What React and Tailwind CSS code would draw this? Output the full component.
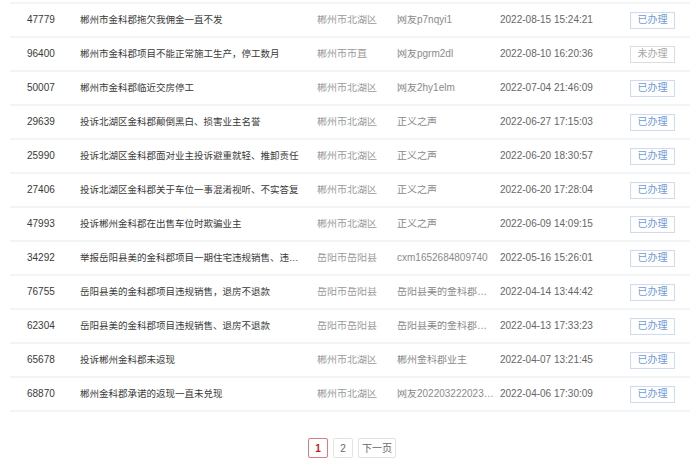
import React from "react";

const rows = [
  ["47779", "郴州市金科郡拖欠我佣金一直不发", "郴州市北湖区", "网友p7nqyi1", "2022-08-15 15:24:21", true],
  ["96400", "郴州市金科郡项目不能正常施工生产，停工数月", "郴州市市直", "网友pgrm2dl", "2022-08-10 16:20:36", false],
  ["50007", "郴州市金科郡临近交房停工", "郴州市北湖区", "网友2hy1elm", "2022-07-04 21:46:09", true],
  ["29639", "投诉北湖区金科郡颠倒黑白、损害业主名誉", "郴州市北湖区", "正义之声", "2022-06-27 17:15:03", true],
  ["25990", "投诉北湖区金科郡面对业主投诉避重就轻、推卸责任", "郴州市北湖区", "正义之声", "2022-06-20 18:30:57", true],
  ["27406", "投诉北湖区金科郡关于车位一事混淆视听、不实答复", "郴州市北湖区", "正义之声", "2022-06-20 17:28:04", true],
  ["47993", "投诉郴州金科郡在出售车位时欺骗业主", "郴州市北湖区", "正义之声", "2022-06-09 14:09:15", true],
  ["34292", "举报岳阳县美的金科郡项目一期住宅违规销售、违规收取费用", "岳阳市岳阳县", "cxm1652684809740", "2022-05-16 15:26:01", true],
  ["76755", "岳阳县美的金科郡项目违规销售，退房不退款", "岳阳市岳阳县", "岳阳县美的金科郡业主", "2022-04-14 13:44:42", true],
  ["62304", "岳阳县美的金科郡项目违规销售、退房不退款", "岳阳市岳阳县", "岳阳县美的金科郡业主", "2022-04-13 17:33:23", true],
  ["65678", "投诉郴州金科郡未返现", "郴州市北湖区", "郴州金科郡业主", "2022-04-07 13:21:45", true],
  ["68870", "郴州金科郡承诺的返现一直未兑现", "郴州市北湖区", "网友20220322202345", "2022-04-06 17:30:09", true],
];

export default function App() {
  return (
    <div
      className="w-[700px] h-[463px] bg-white overflow-hidden"
      style={{ fontFamily: '"Liberation Sans", "Noto Sans CJK SC", sans-serif' }}
    >
      <div className="mx-[10px] w-[680px] pt-[2px]">
        <div className="border-t-2 border-[#f3f4f6]">
          {rows.map((r) => (
            <div
              key={r[0]}
              className="flex items-center h-[34px] border-b-2 border-[#f3f4f6] text-[10px] leading-none"
            >
              <div className="w-[70px] pl-[17px] text-[#3a3a3a]">{r[0]}</div>
              <div className="w-[237px] pr-[17px] text-[9.5px] text-[#3a3a3a] truncate">{r[1]}</div>
              <div className="w-[80px] text-[#9a9a9a] truncate">{r[2]}</div>
              <div className="w-[103px] pr-[6px] text-[#8a8a8a] truncate">{r[3]}</div>
              <div className="w-[130px] text-[#666]">{r[4]}</div>
              <div className="w-[60px]">
                {r[5] ? (
                  <span className="inline-flex items-center justify-center w-[45px] h-[17px] border border-[#cfdcef] text-[#6f9ad6] text-[10px] shadow-[inset_0_0_1px_#e3ebf6]">
                    已办理
                  </span>
                ) : (
                  <span className="inline-flex items-center justify-center w-[45px] h-[17px] border border-[#dcdcdc] text-[#a8a8a8] text-[10px]">
                    未办理
                  </span>
                )}
              </div>
            </div>
          ))}
        </div>
        <div className="flex justify-center gap-[5px] mt-[26px] pl-[4px] text-[10px]">
          <span className="w-[20px] h-[20px] flex items-center justify-center border border-[#e07a80] rounded-[2px] text-[#c8161d] font-bold">
            1
          </span>
          <span className="w-[20px] h-[20px] flex items-center justify-center border border-[#e3e3e3] rounded-[2px] text-[#666]">
            2
          </span>
          <span className="h-[20px] px-[3px] flex items-center justify-center border border-[#e3e3e3] rounded-[2px] text-[#666]">
            下一页
          </span>
        </div>
      </div>
    </div>
  );
}
